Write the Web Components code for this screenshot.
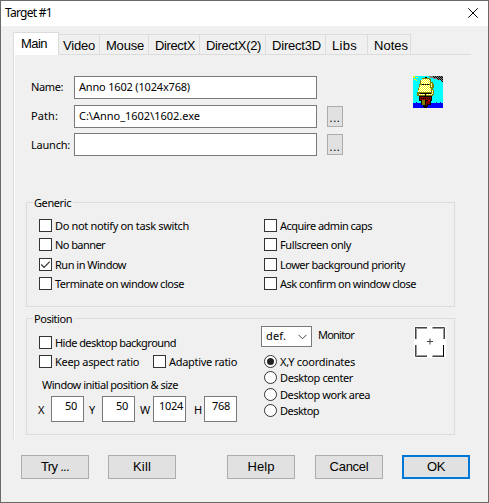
<!DOCTYPE html>
<html lang="en"><head><meta charset="utf-8"><title>Target #1</title>
<style>
html,body{margin:0;height:503px;overflow:hidden;background:#f0f0f0}
body{font:11px/13px "Noto Sans","Open Sans",sans-serif;color:#000}
.launch{display:flex;justify-content:space-between;padding:21px 45px 0 16px}
.rows{display:grid;grid-template-columns:43px 243px 16px;grid-template-rows:23px 23px 23px;row-gap:5.5px;align-items:center}
.rows dlg-push{margin-left:10px;width:16px;height:21px}
.rows dlg-push fit-text{padding-top:3px}
.cols{display:grid;grid-template-columns:225px 1fr}
.checks{display:grid;grid-template-rows:19px 20px 19px 13px;align-items:start}
.left{display:grid;grid-template-rows:19px 23px 18px 26px}
.radios{display:grid;grid-template-rows:16px 17px 16px 13px}
.ratio{display:grid;grid-template-columns:114px auto}
.xy{display:grid;grid-template-columns:12px 39px 12px 39px 12px 39px 12px 33px;align-items:start;margin-left:0}
.xy fit-text{padding-top:7px;margin-left:-1px}
.buttons{display:flex;margin:16px 18px 0 20px;height:24px}
.buttons dlg-push{width:68px}
.b{font:13px/16px "Liberation Sans",Arial,sans-serif}
</style></head><body>
<dialog-window>
 <fit-text slot="title" w="47" style="font-size:12px">Target #1</fit-text>
 <tab-strip slot="tabs">
  <tab-item active w="26" style="width:46px">Main</tab-item>
  <tab-item w="32" style="width:41px;padding-left:4px">Video</tab-item>
  <tab-item w="38" style="width:49px">Mouse</tab-item>
  <tab-item w="40" style="width:51px">DirectX</tab-item>
  <tab-item w="55" style="width:66px">DirectX(2)</tab-item>
  <tab-item w="49" style="width:60px">Direct3D</tab-item>
  <tab-item w="25" style="width:42px">Libs</tab-item>
  <tab-item w="34" style="width:43px">Notes</tab-item>
 </tab-strip>
 <div class="launch">
  <div class="rows">
   <fit-text w="32" style="margin-top:-3px">Name:</fit-text><text-field><fit-text w="111">Anno 1602 (1024x768)</fit-text></text-field><span></span>
   <fit-text w="27" style="margin-top:-1px">Path:</fit-text><text-field><fit-text w="121">C:\Anno_1602\1602.exe</fit-text></text-field><dlg-push><fit-text w="11">...</fit-text></dlg-push>
   <fit-text w="39">Launch:</fit-text><text-field></text-field><dlg-push><fit-text w="11">...</fit-text></dlg-push>
  </div>
  <ship-icon></ship-icon>
 </div>
 <group-box label="Generic" w="37" style="height:105px;margin-top:46px">
  <div class="cols" style="padding:16px 0 0 12px">
   <div class="checks">
    <check-box w="134">Do not notify on task switch</check-box>
    <check-box w="50">No banner</check-box>
    <check-box w="71" checked>Run in Window</check-box>
    <check-box w="129">Terminate on window close</check-box>
   </div>
   <div class="checks">
    <check-box w="92">Acquire admin caps</check-box>
    <check-box w="71">Fullscreen only</check-box>
    <check-box w="125">Lower background priority</check-box>
    <check-box w="136">Ask confirm on window close</check-box>
   </div>
  </div>
 </group-box>
 <group-box label="Position" w="38" style="height:117px;margin-top:11px">
  <div class="cols" style="padding-left:12px;grid-template-columns:225px 150px auto">
   <div class="left" style="padding-top:17px">
    <check-box w="121">Hide desktop background</check-box>
    <div class="ratio"><check-box w="84">Keep aspect ratio</check-box><check-box w="68">Adaptive ratio</check-box></div>
    <fit-text w="136" style="margin-left:3px">Window initial position &amp; size</fit-text>
    <div class="xy">
     <fit-text w="6">X</fit-text><number-field w="12" style="--r:6px">50</number-field>
     <fit-text w="6">Y</fit-text><number-field w="12" style="--r:6px">50</number-field>
     <fit-text w="10">W</fit-text><number-field w="24" style="--r:2px">1024</number-field>
     <fit-text w="8" style="margin-left:2px">H</fit-text><number-field w="18" style="--r:6px">768</number-field>
    </div>
   </div>
   <div style="padding-top:7px">
    <div style="display:flex;gap:6px;margin-left:-3px;height:29px"><drop-down><fit-text w="20">def.</fit-text></drop-down><fit-text w="36" style="margin-top:2px">Monitor</fit-text></div>
    <div class="radios">
     <radio-dot w="75" checked>X,Y coordinates</radio-dot>
     <radio-dot w="73">Desktop center</radio-dot>
     <radio-dot w="90">Desktop work area</radio-dot>
     <radio-dot w="39">Desktop</radio-dot>
    </div>
   </div>
   <center-icon style="margin-top:7px"></center-icon>
  </div>
 </group-box>
 <div slot="footer" class="buttons">
  <dlg-push><fit-text class="b" w="28">Try ...</fit-text></dlg-push>
  <dlg-push style="margin-left:19px"><fit-text class="b" w="18">Kill</fit-text></dlg-push>
  <dlg-push style="margin-left:51px"><fit-text class="b" w="27">Help</fit-text></dlg-push>
  <dlg-push style="margin-left:20px"><fit-text class="b" w="39">Cancel</fit-text></dlg-push>
  <dlg-push style="margin-left:19px" primary><fit-text class="b" w="18">OK</fit-text></dlg-push>
 </div>
</dialog-window>
<script>
const define=(name,html,setup)=>customElements.define(name,class extends HTMLElement{
 constructor(){super();this.attachShadow({mode:'open'}).innerHTML=html(this);}
 connectedCallback(){if(setup)setup(this);}
});
// Text run whose tracking is adjusted to fill the width in the w attribute.
define('fit-text',()=>`<style>:host{display:block;white-space:pre}span{display:inline-block}</style><span><slot></slot></span>`,el=>{
 const s=el.shadowRoot.querySelector('span'),n=el.textContent.length,w=+el.getAttribute('w');
 if(w&&n>1)s.style.letterSpacing=((w-s.getBoundingClientRect().width)/n).toFixed(3)+'px';
});
define('dialog-window',()=>`<style>
:host{display:flex;flex-direction:column;box-sizing:border-box;width:489px;height:503px;border:1px solid #6a6a6a;background:#f0f0f0}
header{height:25px;background:#fff;display:flex;justify-content:space-between;box-sizing:border-box;padding:5px 10px 0 4px}
header svg{margin-top:2px}
.panel{height:384px;margin-left:12px;border-left:1px solid #dcdcdc;box-shadow:inset 1px 0 #fff;box-sizing:border-box;padding-left:1px}
</style><header><slot name="title"></slot><svg width="10" height="10" viewBox="0 0 10 10"><path d="M.3.3 9.7 9.7M9.7.3.3 9.7" stroke="#000" fill="none"/></svg></header>
<slot name="tabs"></slot><div class="panel"><slot></slot></div><slot name="footer"></slot>`);
define('tab-strip',()=>`<style>:host{display:flex;align-items:flex-end;height:23px;margin:6px 17px 0 12px;background:linear-gradient(#dcdcdc,#dcdcdc) 0 22px/100% 1px no-repeat}</style><slot></slot>`);
define('tab-item',el=>`<style>:host{display:block;box-sizing:border-box;height:21px;border:1px solid #dcdcdc;border-left:0;padding:3px 0 0 6px;font:13px/15px "Liberation Sans",Arial,sans-serif}
:host([active]){height:23px;background:#fff;border-left:1px solid #dcdcdc;border-bottom:0;padding-left:7px}</style><fit-text w="${el.getAttribute('w')}">${el.textContent}</fit-text>`);
define('text-field',()=>`<style>:host{display:block;box-sizing:border-box;height:23px;background:#fff;border:1px solid #7a7a7a;padding:3px 4px}</style><slot></slot>`);
define('number-field',el=>`<style>:host{display:flex;justify-content:flex-end;box-sizing:border-box;width:33px;height:26px;background:#fff;border:1px solid #7a7a7a;padding:2px var(--r) 0 0}</style><fit-text w="${el.getAttribute('w')}">${el.textContent}</fit-text>`);
define('dlg-push',()=>`<style>:host{display:flex;align-items:center;justify-content:center;box-sizing:border-box;background:#e1e1e1;border:1px solid #adadad}:host([primary]){border:2px solid #0078d7}</style><slot></slot>`);
define('group-box',el=>`<style>:host{display:block;box-sizing:border-box;border:1px solid #dcdcdc;margin-left:11px;width:429px}
fit-text{width:max-content;height:14px;line-height:14px;margin:-7px 0 -7px 6px;padding:0 2px 0 1px;background:#f0f0f0}</style><fit-text w="${el.getAttribute('w')}">${el.getAttribute('label')}</fit-text><slot></slot>`);
define('check-box',el=>`<style>:host{display:flex;gap:3px;height:13px}i{box-sizing:border-box;width:13px;height:13px;border:1px solid #333;background:#fff;display:block;flex:none}svg{display:block}</style><i>${el.hasAttribute('checked')?'<svg width="11" height="11"><path d="M1.3 5.5 4.1 8.3 9.7 2.7" fill="none" stroke="#333" stroke-width="1.2"/></svg>':''}</i><fit-text w="${el.getAttribute('w')}">${el.innerHTML}</fit-text>`);
define('radio-dot',el=>`<style>:host{display:flex;gap:3px;height:13px}svg{flex:none}</style><svg width="13" height="13"><circle cx="6.5" cy="6.5" r="6" fill="#fff" stroke="#333"/>${el.hasAttribute('checked')?'<circle cx="6.5" cy="6.5" r="3.5" fill="#222"/>':''}</svg><fit-text w="${el.getAttribute('w')}">${el.textContent}</fit-text>`);
define('drop-down',()=>`<style>:host{display:flex;justify-content:space-between;box-sizing:border-box;width:51px;height:21px;background:#fff;border:1px solid #7a7a7a;padding:2px 4px}svg{margin-top:5px}</style><slot></slot><svg width="9" height="6"><path d="M.5.8 4.5 4.8 8.5.8" fill="none" stroke="#444"/></svg>`);
define('center-icon',()=>`<style>:host{display:block;width:32px;height:32px}svg{display:block}</style><svg width="32" height="32"><path fill="#fff" d="M0 0h32v32H0z"/><path d="M1.5 13V2.500M2.500 13V2.500H13M18.500 2.500H29.500V13M2.500 19V29.500H13M18.500 29.500H29.500" fill="none" stroke="#999"/><path d="M1 1.500H13M1.500 1V13M18.500 1.500H30.500V13M1.500 19V30.500H13M18.500 30.500H30" stroke="#444" fill="none"/><path d="M29.500 19V31" stroke="#000"/><path d="M13 15.500h6M16 12.500v6" stroke="#444"/></svg>`);
define('ship-icon',()=>`<style>:host{display:block;width:30px;height:32px}svg{display:block}</style><svg width="30" height="32" shape-rendering="crispEdges"><defs>
<pattern id="s" width="2" height="2" patternUnits="userSpaceOnUse"><path fill="#ff0" d="M0 0h2v2H0z"/><path fill="#fff" d="M0 0h1v1H0zM1 1h1v1H1z"/></pattern>
<pattern id="g" width="2" height="2" patternUnits="userSpaceOnUse"><path fill="#808080" d="M0 0h2v2H0z"/><path fill="#000" d="M0 0h1v1H0zM1 1h1v1H1z"/></pattern>
<pattern id="r" width="2" height="2" patternUnits="userSpaceOnUse"><path fill="#800000" d="M0 0h2v2H0z"/><path fill="#000" d="M0 0h1v1H0z"/></pattern></defs>
<path fill="#0ff" d="M0 0h30v32H0z"/><path fill="#ff0" d="M0 0h2v2H0zM3 1h2v1H3zM1 3h2v1H1zM3 4h1v1H3z"/>
<path fill="#808080" d="M16 0h14v4h-5V3h-5V2h-3z"/><path fill="url(#g)" d="M20 0h10v6h-2V4h-4V2h-4z"/>
<path fill="#00f" d="M0 27h3v-1h1v1h19v-1h1v1h3v-1h1v1h2v5H0z"/>
<path fill="#808000" d="M9 2h8v1h1v3h2v2h1v4h-1v2h1v5h-1v1H4v-4h1v-4h1V8h1V4h2z"/>
<path fill="url(#s)" d="M9 3h7v1h1v4H8V4h1zM7 9h10v3h1v4H5v-2h1v-3h1zM6 18h13v1H6zM18 7h1v4h-1zM19 14h1v4h-1z"/>
<path fill="#000" d="M12 1h2v1h-2zM9 8h2v1H9zM12 8h1v1h-1zM14 8h2v1h-2zM7 17h11v1H7zM12 18h1v4h-1zM6 20h13v5h-1v4h-3v2h-1v1h-3v-1h-1v-2H8v-4H6z"/>
<path fill="url(#r)" d="M7 21h11v3H7z"/><path fill="#808000" d="M9 24h3v5H9z"/><path fill="#800000" d="M13 25h4v3h-3v2h-1z"/><path fill="#c00" d="M7 22h1v1H7zM15 24h2v1h-2z"/>
</svg>`);
</script></body></html>
